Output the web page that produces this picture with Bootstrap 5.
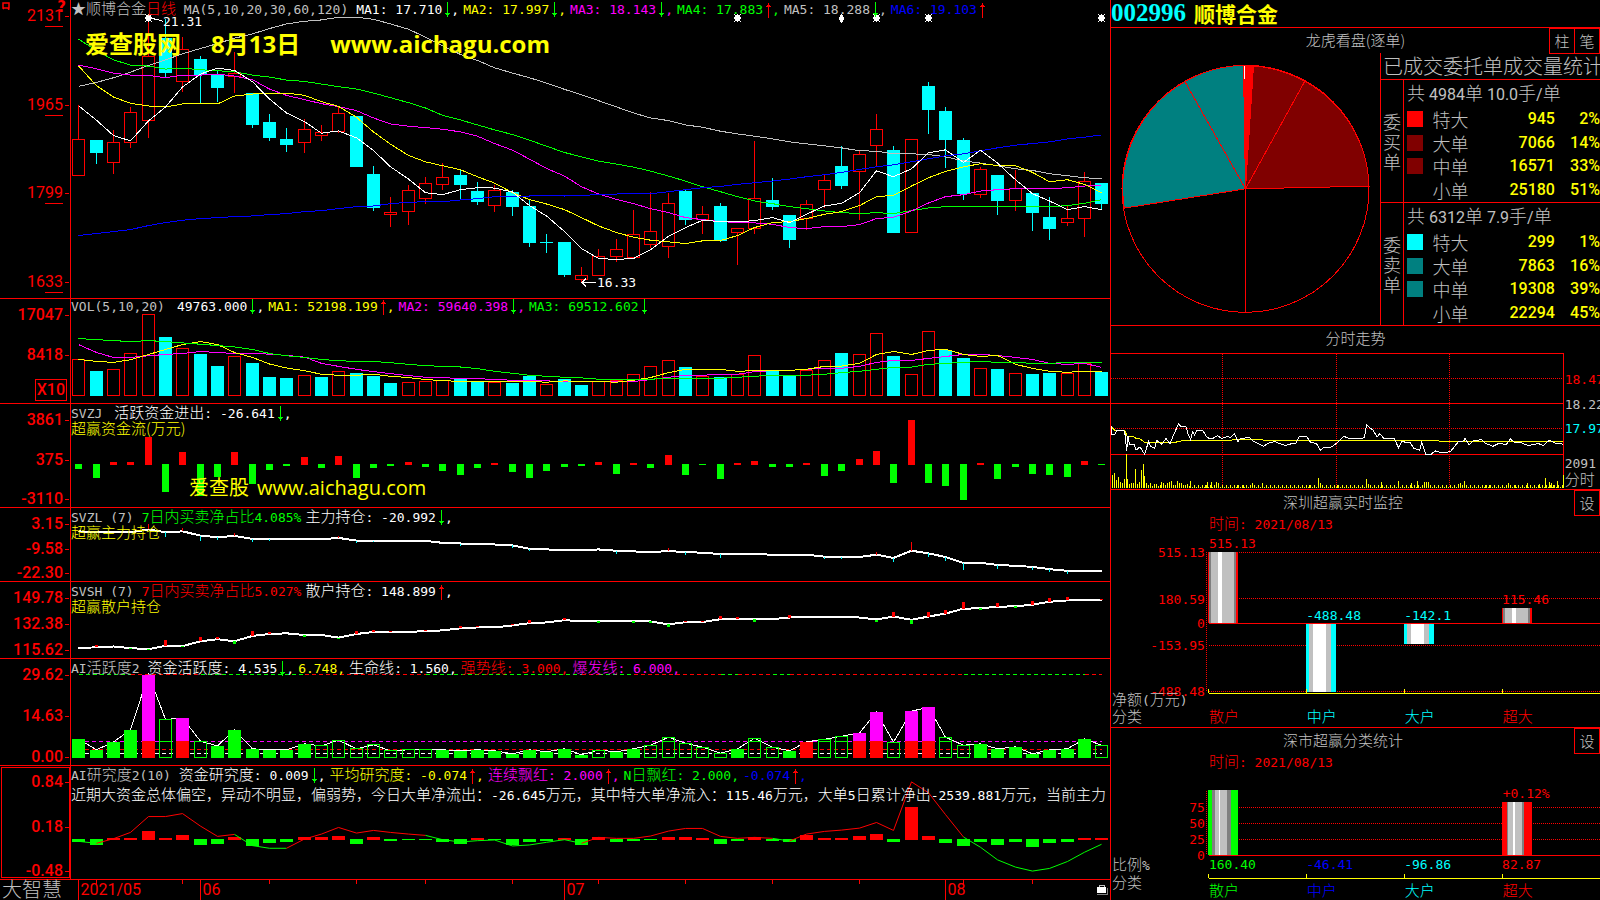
<!DOCTYPE html>
<html lang="zh-CN">
<head>
<meta charset="utf-8">
<meta name="viewport" content="width=device-width, initial-scale=1">
<title>顺博合金 002996</title>
<link href="https://cdn.jsdelivr.net/npm/bootstrap@5.3.0/dist/css/bootstrap.min.css" rel="stylesheet">
<style>
:root{--r:#f00;--g:#0f0;--c:#0ff;--y:#ff0;--m:#f0f;--w:#fff;--s:#c0c0c0;--b:#00f}
body{background:#000;color:var(--s);font-family:"DejaVu Sans Mono","Noto Sans CJK SC",monospace;font-size:13px;line-height:16px;overflow-x:hidden}
.r{color:var(--r)}.g{color:var(--g)}.c{color:var(--c)}.y{color:var(--y)}.m{color:var(--m)}.w{color:var(--w)}.s{color:var(--s)}.b{color:var(--b)}
.zh{font-family:"Noto Sans CJK SC",sans-serif;font-size:15px;font-weight:300}
.terminal{display:grid;grid-template-columns:minmax(0,1110fr) minmax(0,490fr);min-height:100vh}
.charts{display:grid;grid-template-rows:minmax(0,299fr) minmax(0,105fr) minmax(0,104fr) minmax(0,74fr) minmax(0,77fr) minmax(0,107fr) minmax(0,114fr) minmax(0,20fr)}
.quote{display:grid;grid-template-rows:minmax(0,28fr) minmax(0,298fr) minmax(0,164fr) minmax(0,238fr) minmax(0,172fr);border-left:1px solid var(--r)}
.quote>section,.quote>header{border-bottom:1px solid var(--r)}
.quote>section:last-child{border-bottom:0}
.pane{border-bottom:1px solid var(--r)}
.axis{flex:0 0 71px;border-right:1px solid var(--r);padding:8px 7px 0 0;font:500 16px/16px Roboto,"Liberation Sans",sans-serif;color:var(--r)}
.axis>span::after{content:"";position:absolute;right:-6px;top:8px;width:4px;height:1px;background:var(--r)}
.axis>span{position:relative}
.axis.thin{font-weight:400;padding-bottom:8px}
.axis u{text-decoration:none;border-bottom:1px solid var(--r);padding-bottom:1px}
.axis>.unit{border:1px solid var(--r);line-height:20px;margin:-8px -4px 2px 0;padding:0 1px}
.axis>.unit::after{display:none}
.axis.boxed{outline:1px solid var(--r);outline-offset:-2px}
.plot{min-width:0}
.plot>svg,.fill>svg{position:absolute;inset:0;width:100%;height:100%}
svg *{vector-effect:non-scaling-stroke}
.legend-line{gap:4px;white-space:pre;height:16px;align-items:baseline}
.legend-line>:first-child{margin-right:8px}
.legend-line>.snug{margin-right:4px}
.legend-line>span>svg{width:7px;height:16px;margin-left:2px;vertical-align:-4px;margin-top:-4px}
.over{position:relative;white-space:nowrap}
.comment{margin-top:4px}
.note{position:absolute;white-space:nowrap;transform:translateY(-50%)}
.note.end{transform:translate(-100%,-50%)}
.brand{position:absolute;left:14px;top:31px;font:700 24px/26px "Open Sans","Noto Sans CJK SC",sans-serif;color:var(--y);white-space:nowrap;gap:30px}
.brand-low{position:absolute;left:118px;bottom:6px;font:400 20px/26px "Open Sans","Noto Sans CJK SC",sans-serif;color:var(--y);white-space:nowrap;gap:8px}
.logo{flex:0 0 71px;font:300 20px/18px "Noto Sans CJK SC",sans-serif;padding-left:2px;white-space:nowrap}
.dates{font:400 16px/18px Roboto,sans-serif;color:var(--r)}
.menu-mark{position:absolute;left:2px;top:2px;width:8px;height:8px}
.help{position:absolute;right:4px;top:0;font:700 15px/15px "DejaVu Sans",sans-serif}
.code{font:700 25px/26px "Liberation Serif",serif}
.stock{font:700 21px/26px "Noto Sans CJK SC",sans-serif}
.key{background:transparent;border:1px solid var(--r);border-radius:0;color:var(--s);width:26px;height:26px;padding:0;line-height:22px;margin-left:-1px;flex:none}
.key:hover{color:var(--w);border-color:var(--r)}
.stats{flex:0 0 220px;min-width:0;border-left:1px solid var(--r)}
.stats-head{font:300 20px/26px "Noto Sans CJK SC",sans-serif;padding-left:2px;border-bottom:1px solid var(--r);white-space:nowrap}
.side{flex:0 0 23px;font:300 18px/20px "Noto Sans CJK SC",sans-serif;border-right:1px solid var(--r)}
.big{font:400 16px/20px Roboto,"Noto Sans CJK SC",sans-serif}
.big .zh{font-size:18px;line-height:20px}
.book{height:100%;width:100%}
.book td,.book th{padding:0;vertical-align:middle;font-weight:300;line-height:20px;white-space:nowrap}
.book th{padding-left:3px;font-weight:400}
.book .num{font-weight:500;color:var(--y);text-align:right}
.swatch{display:block;width:16px;height:16px;margin-left:3px}
.group+.group{border-top:1px solid var(--r)}
.sect-title{position:relative;line-height:23px;height:25px}
</style>
</head>
<body>
<svg width="0" height="0" class="position-absolute" aria-hidden="true">
  <symbol id="dn" viewBox="0 0 7 16"><path d="M3.500 0V15M1 11.500H6M2 12.500H5" stroke="#0f0" fill="none" shape-rendering="crispEdges"/></symbol>
  <symbol id="up" viewBox="0 0 7 16"><path d="M3.500 1V16M1 4.500H6M2 3.500H5" stroke="#f00" fill="none" shape-rendering="crispEdges"/></symbol>
</svg>
<main class="terminal">
  <div class="charts">
    <section class="pane d-flex">
      <div class="axis thin d-flex flex-column justify-content-between align-items-end position-relative">
        <svg class="menu-mark" viewBox="0 0 8 8"><path d="M1 1H7V6H1ZM1 7L2 6M7 8L6 6" fill="none" stroke="#f00" stroke-width="1.500"/></svg>
        <b class="help">?</b>
        <span>21<u>31</u></span><span>19<u>65</u></span><span>17<u>99</u></span><span>16<u>33</u></span>
      </div>
      <div class="plot position-relative flex-fill">
        <svg id="kline" preserveAspectRatio="none" viewBox="71 0 1039 897"></svg>
        <div class="over legend-line d-flex">
          <span class="snug"><span class="zh">★顺博合金<span class="r">日线</span></span> MA(5,10,20,30,60,120)</span>
          <span class="w">MA1: 17.710<svg><use href="#dn"/></svg>,</span>
          <span class="y">MA2: 17.997<svg><use href="#dn"/></svg>,</span>
          <span class="m">MA3: 18.143<svg><use href="#dn"/></svg>,</span>
          <span class="g">MA4: 17.883<svg><use href="#up"/></svg>,</span>
          <span class="s">MA5: 18.288<svg><use href="#dn"/></svg>,</span>
          <span class="b">MA6: 19.103<svg><use href="#up"/></svg></span>
        </div>
        <div class="brand d-flex"><span>爱查股网</span><span>8月13日</span><span>www.aichagu.com</span></div>
      </div>
    </section>
    <section class="pane d-flex">
      <div class="axis d-flex flex-column justify-content-between align-items-end"><span>17047</span><span>8418</span><span class="unit">X10</span></div>
      <div class="plot position-relative flex-fill">
        <svg id="vol" preserveAspectRatio="none" viewBox="71 10 1039 315"></svg>
        <div class="over legend-line d-flex">
          <span>VOL(5,10,20)</span><span class="w">49763.000<svg><use href="#dn"/></svg>,</span>
          <span class="y">MA1: 52198.199<svg><use href="#up"/></svg>,</span>
          <span class="m">MA2: 59640.398<svg><use href="#dn"/></svg>,</span>
          <span class="g">MA3: 69512.602<svg><use href="#dn"/></svg></span>
        </div>
      </div>
    </section>
    <section class="pane d-flex">
      <div class="axis d-flex flex-column justify-content-between align-items-end"><span>3861</span><span>375</span><span>-3110</span></div>
      <div class="plot position-relative flex-fill">
        <svg id="flow" preserveAspectRatio="none" viewBox="71 325 1039 312"></svg>
        <div class="over legend-line d-flex"><span>SVZJ</span><span class="w"><span class="zh">活跃资金进出</span>: -26.641<svg><use href="#dn"/></svg>,</span></div>
        <div class="over y zh">超赢资金流(万元)</div>
        <div class="brand-low d-flex"><span>爱查股</span><span>www.aichagu.com</span></div>
      </div>
    </section>
    <section class="pane d-flex">
      <div class="axis d-flex flex-column justify-content-between align-items-end"><span>3.15</span><span>-9.58</span><span>-22.30</span></div>
      <div class="plot position-relative flex-fill">
        <svg id="main-pos" preserveAspectRatio="none" viewBox="71 637 1039 222"></svg>
        <div class="over legend-line d-flex"><span class="snug">SVZL (7)</span><span class="g">7<span class="zh">日内买卖净占比</span>4.085%</span><span class="w"><span class="zh">主力持仓</span>: -20.992<svg><use href="#dn"/></svg>,</span></div>
        <div class="over y zh">超赢主力持仓</div>
      </div>
    </section>
    <section class="pane d-flex">
      <div class="axis d-flex flex-column justify-content-between align-items-end"><span>149.78</span><span>132.38</span><span>115.62</span></div>
      <div class="plot position-relative flex-fill">
        <svg id="retail-pos" preserveAspectRatio="none" viewBox="71 7 1039 231"></svg>
        <div class="over legend-line d-flex"><span class="snug">SVSH (7)</span><span class="r">7<span class="zh">日内买卖净占比</span>5.027%</span><span class="w"><span class="zh">散户持仓</span>: 148.899<svg><use href="#up"/></svg>,</span></div>
        <div class="over y zh">超赢散户持仓</div>
      </div>
    </section>
    <section class="pane d-flex">
      <div class="axis d-flex flex-column justify-content-between align-items-end"><span>29.62</span><span>14.63</span><span>0.00</span></div>
      <div class="plot position-relative flex-fill">
        <svg id="active" preserveAspectRatio="none" viewBox="71 238 1039 321"></svg>
        <div class="over legend-line d-flex"><span class="snug">AI<span class="zh">活跃度</span>2</span><span class="w"><span class="zh">资金活跃度</span>: 4.535<svg><use href="#dn"/></svg>,</span><span class="y">6.748,</span><span class="w"><span class="zh">生命线</span>: 1.560,</span><span class="r"><span class="zh">强势线</span>: 3.000,</span><span class="m"><span class="zh">爆发线</span>: 6.000,</span></div>
      </div>
    </section>
    <section class="pane d-flex">
      <div class="axis boxed d-flex flex-column justify-content-between align-items-end"><span>0.84</span><span>0.18</span><span>-0.48</span></div>
      <div class="plot position-relative flex-fill">
        <svg id="research" preserveAspectRatio="none" viewBox="71 559 1039 342"></svg>
        <div class="over legend-line d-flex"><span class="snug">AI<span class="zh">研究度</span>2(10)</span><span class="w"><span class="zh">资金研究度</span>: 0.009<svg><use href="#dn"/></svg>,</span><span class="y"><span class="zh">平均研究度</span>: -0.074<svg><use href="#up"/></svg>,</span><span class="m"><span class="zh">连续飘红</span>: 2.000<svg><use href="#up"/></svg>,</span><span class="g">N<span class="zh">日飘红</span>: 2.000,</span><span class="b">-0.074<svg><use href="#up"/></svg>,</span></div>
        <div class="over w comment"><span class="zh">近期大资金总体偏空，异动不明显，偏弱势，今日大单净流出：</span>-26.645<span class="zh">万元，其中特大单净流入：</span>115.46<span class="zh">万元，大单</span>5<span class="zh">日累计净出</span>-2539.881<span class="zh">万元，当前主力</span></div>
      </div>
    </section>
    <footer class="d-flex">
      <div class="logo">大智慧</div>
      <div class="plot dates position-relative flex-fill" id="dates"><svg id="ticks" preserveAspectRatio="none" viewBox="71 0 1039 20"></svg></div>
    </footer>
  </div>

  <div class="quote">
    <header class="d-flex gap-2"><span class="code c">002996</span><span class="stock y">顺博合金</span></header>
    <section class="d-flex flex-column">
      <div class="sect-title text-center zh">龙虎看盘(逐单)
        <div class="d-flex position-absolute top-0 end-0"><button class="btn key zh" type="button">柱</button><button class="btn key zh" type="button">笔</button></div>
      </div>
      <div class="d-flex flex-fill">
        <div class="fill flex-fill position-relative">
          <svg viewBox="18 162 808 817" fill="none" stroke="#f00" shape-rendering="crispEdges">
            <path d="M422 570L416 199A370 370 0 0 0 240 248Z" fill="#008080"/>
            <path d="M422 570L240 248A370 370 0 0 0 58 628Z" fill="#008080"/>
            <path d="M422 570L446 201A370 370 0 0 1 600 247Z" fill="#800000"/>
            <path d="M422 570L600 247A370 370 0 0 1 793 562Z" fill="#800000"/>
            <path d="M422 570L416 199H446Z" fill="#f00"/>
            <circle cx="422" cy="570" r="371"/><path d="M422 570V941"/><path d="M418 201V240" stroke="#fff"/>
          </svg>
        </div>
        <div class="stats d-flex flex-column">
          <div class="stats-head">已成交委托单成交量统计</div>
          <div class="group d-flex flex-fill">
            <div class="side d-flex flex-column justify-content-center align-items-center"><span>委</span><span>买</span><span>单</span></div>
            <table class="book big">
              <tr><th colspan="4"><span class="zh">共</span> 4984<span class="zh">单</span> 10.0<span class="zh">手</span>/<span class="zh">单</span></th></tr>
              <tr><td><span class="swatch" style="background:#f00"></span></td><td class="zh">特大</td><td class="num">945</td><td class="num">2%</td></tr>
              <tr><td><span class="swatch" style="background:#800000"></span></td><td class="zh">大单</td><td class="num">7066</td><td class="num">14%</td></tr>
              <tr><td><span class="swatch" style="background:#800000"></span></td><td class="zh">中单</td><td class="num">16571</td><td class="num">33%</td></tr>
              <tr><td></td><td class="zh">小单</td><td class="num">25180</td><td class="num">51%</td></tr>
            </table>
          </div>
          <div class="group d-flex flex-fill">
            <div class="side d-flex flex-column justify-content-center align-items-center"><span>委</span><span>卖</span><span>单</span></div>
            <table class="book big">
              <tr><th colspan="4"><span class="zh">共</span> 6312<span class="zh">单</span> 7.9<span class="zh">手</span>/<span class="zh">单</span></th></tr>
              <tr><td><span class="swatch" style="background:#0ff"></span></td><td class="zh">特大</td><td class="num">299</td><td class="num">1%</td></tr>
              <tr><td><span class="swatch" style="background:#008080"></span></td><td class="zh">大单</td><td class="num">7863</td><td class="num">16%</td></tr>
              <tr><td><span class="swatch" style="background:#008080"></span></td><td class="zh">中单</td><td class="num">19308</td><td class="num">39%</td></tr>
              <tr><td></td><td class="zh">小单</td><td class="num">22294</td><td class="num">45%</td></tr>
            </table>
          </div>
        </div>
      </div>
    </section>
    <section class="fill position-relative" id="intra-box">
      <svg id="intra" preserveAspectRatio="none" viewBox="17 19 1468 492"></svg>
      <div class="sect-title text-center zh">分时走势</div>
    </section>
    <section class="fill position-relative" id="live-box">
      <svg id="live" preserveAspectRatio="none" viewBox="17 0 1468 714"></svg>
      <div class="sect-title d-flex text-center zh"><span class="flex-fill">深圳超赢实时监控</span>
        <button class="btn key zh" type="button">设</button></div>
    </section>
    <section class="fill position-relative" id="class-box">
      <svg id="classes" preserveAspectRatio="none" viewBox="17 24 1468 516"></svg>
      <div class="sect-title d-flex text-center zh"><span class="flex-fill">深市超赢分类统计</span>
        <button class="btn key zh" type="button">设</button></div>
    </section>
  </div>
</main>
<script src="https://cdn.jsdelivr.net/npm/bootstrap@5.3.0/dist/js/bootstrap.bundle.min.js"></script>
<script>
const R='#f00',G='#0f0',C='#0ff',Y='#ff0',M='#f0f',W='#fff',S='#c0c0c0',B='#00f';
const X=i=>Math.round(78.2+17.34*i)+.5;
const put=(id,s)=>document.getElementById(id).innerHTML=`<g fill="none" shape-rendering="crispEdges">${s}</g>`;
const line=(a,c,w=1,from=0)=>`<polyline stroke="${c}" stroke-width="${w}" points="${a.map((y,i)=>X(i+from)+','+y).join(' ')}"/>`;
const seg=(x1,y1,x2,y2,c,w=1,d='')=>`<path d="M${x1} ${y1}L${x2} ${y2}" stroke="${c}" stroke-width="${w}" ${d?`stroke-dasharray="${d}"`:''}/>`;
const fillR=(x,y,w,h,c)=>`<rect x="${x}" y="${y}" width="${w}" height="${h}" fill="${c}"/>`;
const box=(x,y,w,h,c)=>`<rect x="${x}" y="${y}" width="${w}" height="${h}" stroke="${c}"/>`;
const hollow=(i,t,b,c)=>box(X(i)-6,t,12,b-t,c);
const solid=(i,t,b,c)=>fillR(X(i)-6.5,t,13,b-t,c);

/* daily candles: kind, high, body top, body bottom, low */
const K=`r316,421,527,527 c420,420,462,494 r390,430,488,525 r321,340,428,444 r66,169,364,414 c58,115,219,234 r110,148,244,276 c168,177,227,309 c215,225,264,306 r158,222,230,279 c279,279,375,384 c342,366,414,423 c384,417,435,459 r357,391,428,462 r375,400,409,423 r318,343,395,400 c348,348,504,504 c501,525,627,636 r594,640,647,682 r558,574,637,678 r534,553,598,615 r492,535,554,573 c512,528,558,600 c549,576,609,618 r558,574,620,639 c573,579,624,651 c600,621,732,744 c705,729,732,762 c729,729,828,834 r804,829,842,850 r750,772,829,829 r720,751,772,789 r633,706,775,776 r579,697,736,748 r582,613,742,777 c570,576,663,678 r621,646,661,705 c612,621,726,729 r688,688,700,798 r423,598,688,705 c537,603,624,633 c648,648,723,747 r603,616,658,693 r528,544,569,627 c438,501,561,570 r453,466,517,663 r342,391,439,501 c438,453,702,702 r421,421,700,700 c246,258,330,402 c321,333,420,507 c414,420,585,603 r504,511,584,597 c528,528,606,648 r513,568,604,636 c582,582,642,696 c594,654,690,723 r621,658,670,681 r519,547,658,714 c552,552,615,633`.split(' ');
let s='';
K.forEach((k,i)=>{const [h,t,b,l]=k.slice(1).split(',').map(Number);
  s+=k[0]=='r'?seg(X(i),h,X(i),t,R)+seg(X(i),b,X(i),l,R)+hollow(i,t,b,R):seg(X(i),h,X(i),l,C)+solid(i,t,b,C)});
s+=line([260,248,234,217,197,180,162,146,131,115,102,86,72,64,60,52,52,58,72,88,112,138,164,182,204,220,234,250,269,285,303,322,340,355,363,376,383,395,403,410,418,427,433,439,445,454,455,463,463,465,472,484,491,499,508,513,523,529,535,538],S);
s+=line([118,152,180,196,199,208,205,210,213,216,226,232,241,245,253,261,268,280,294,309,325,347,361,376,391,405,422,440,459,472,485,494,503,515,530,545,562,577,592,605,613,622,628,635,640,643,640,643,634,626,622,622,622,622,622,622,622,619,612,601],G);
s+=line([196,207,220,226,227,234,226,226,223,229,240,268,287,300,312,321,333,355,373,380,384,389,397,410,432,452,479,507,530,562,584,600,613,628,640,655,661,667,670,671,675,685,688,682,682,676,658,654,635,611,592,586,575,571,568,568,568,565,560,558],M);
s+=line([198,258,292,311,319,322,313,313,313,289,283,281,280,287,306,320,353,397,434,468,487,499,511,532,551,580,601,614,631,655,680,700,714,723,728,733,725,724,709,685,670,667,658,645,637,619,592,588,560,535,516,502,493,498,499,519,547,541,555,580],Y);
s+=line([709,703,697,691,679,670,663,658,655,652,650,646,643,637,634,628,622,620,613,609,607,607,602,598,592,592,590,589,590,589,585,584,583,583,577,571,565,561,555,550,545,539,532,526,519,510,502,496,487,478,469,463,454,445,437,432,427,418,413,406],B);
s+=line([318,362,408,424,364,322,262,223,205,212,246,298,340,366,401,394,415,453,502,539,580,586,571,565,566,578,619,650,697,748,778,781,778,752,711,685,663,667,668,664,655,670,645,620,612,580,514,532,508,460,451,489,452,491,541,583,605,631,622,631],W);
[4,38,46,49,59].forEach(i=>{const x=X(i);s+=fillR(x-2.5,46,5,18,W)+fillR(x-3.5,52,7,6,W);[-3.5,2.5].forEach(a=>s+=fillR(x+a,43,1,3,W)+fillR(x+a,64,1,3,W));s+=fillR(x-.5,43,1,24,W)});
s+=fillR(X(44)-1.5,46,3,21,W)+fillR(X(44)-2.5,52,5,9,W)+fillR(X(44)-.5,43,1,27,W);
s+=`<path d="M150 55L156 58L163 64M596 850H582M586 838L582 850L586 862" stroke="#fff"/>`;
put('kline',s);

/* volume */
let v=[193,228,223,175,58,126,160,177,213,184,204,246,249,241,246,229,234,243,264,262,259,258,252,260,262,264,243,268,252,270,260,257,238,214,196,216,244,246,239,181,228,243,226,196,174,178,115,183,238,109,165,189,220,222,235,237,234,235,205,231];
const kind='rcrrrcrccrcccrcrcccrrrccrccrccrrrrrcrcrrccrrcrrcrrccrcrccrrc';
s='';v.forEach((t,i)=>s+=kind[i]=='r'?hollow(i,t,301,R):solid(i,t,303,C));
s+=line([148,172,187,187,182,178,175,169,172,175,175,177,181,186,205,214,223,230,236,242,247,248,251,251,254,256,257,258,260,260,260,260,260,254,247,241,241,238,238,230,227,226,223,220,220,214,202,196,196,190,184,178,178,181,187,193,205,208,205,217],M);
s+=line([193,199,202,194,178,163,148,139,148,172,187,207,219,227,238,241,241,238,244,248,254,257,260,259,260,260,260,262,258,260,260,262,256,248,233,223,223,223,229,227,226,226,223,214,213,205,178,169,178,166,162,178,184,181,208,220,229,232,229,229],Y);
s+=line([130,133,136,139,136,139,143,147,151,155,163,175,182,187,193,197,199,199,203,208,212,214,216,221,229,235,241,244,247,249,253,253,253,253,250,250,250,250,247,244,241,241,241,238,233,229,223,217,216,208,205,202,199,202,202,205,205,202,202,202],G);
put('vol',s);

/* capital flow */
s='';[522,549,501,501,426,591,471,603,546,471,567,525,513,486,519,483,549,519,513,501,516,528,540,519,504,531,549,528,516,513,501,537,504,519,480,540,510,552,504,498,516,516,504,543,528,492,468,564,372,564,573,615,504,552,516,537,540,546,498,510]
.forEach((e,i)=>s+=e<507?fillR(X(i)-3.5,e,7,510-e,R):fillR(X(i)-3.5,507,7,e-507,G));
put('flow',s);

/* main-force holding */
const mp=[708,711,711,711,702,711,708,721,726,722,731,732,732,732,732,728,736,736,736,736,737,743,745,747,748,751,761,763,765,766,763,767,769,771,768,771,773,777,777,777,779,780,779,785,786,786,779,789,767,775,786,804,804,810,813,816,823,828,828,828];
s=line(mp,W,2);
Object.entries({4:685,5:726,6:699,7:738,8:735,9:713,10:741,11:738,15:723,16:743,17:740,22:753,25:759,26:768,31:777,34:759,35:780,37:789,43:792,44:792,46:771,47:801,48:741,49:786,50:798,51:825,53:822,55:825,56:831,57:837}).forEach(([i,e])=>s+=seg(X(i),mp[i],X(i),e,e<mp[i]?R:C));
put('main-pos',s);

/* retail holding */
const rp=[209,205,203,208,211,201,202,187,181,187,171,165,163,168,168,176,165,159,158,158,157,154,148,145,145,139,132,130,123,126,126,126,126,127,136,129,129,120,120,120,120,115,113,112,112,115,121,112,122,112,103,88,87,82,81,76,67,63,63,63];
s=line(rp,W,2);
Object.entries({0:207,1:198,3:211,4:214,5:183,6:206,7:174,8:174,9:195,10:156,11:159,13:173,15:180,16:156,17:153,18:156,20:153,22:141,23:142,25:135,26:123,28:117,30:131,32:131,33:131,34:144,35:126,36:126,37:111,38:114,39:129,41:108,46:129,47:99,48:135,49:99,50:93,51:69,52:93,53:72,54:87,55:66,56:57,57:54,59:58}).forEach(([i,e])=>s+=seg(X(i),rp[i],X(i),e,e<rp[i]?R:G,3));
put('retail-pos',s);

/* activity */
const A='g480 g513 g489 g453 m285 h421 m417 h487 g501 g453 g510 g513 g513 g495 h501 h484 h510 h498 h516 h513 h513 g513 g516 g513 g516 g525 g513 g519 g510 g528 h514 g519 g510 h499 h475 h493 h505 h523 g510 h478 h505 g516 r489 h481 h472 m462 m399 h490 m396 m384 h475 h499 g495 g510 g504 g525 g513 g510 g480 h499'.split(' ');
s=seg(78,487,1102,487,M,1,'4 3')+seg(78,511,1102,511,R,1,'4 3')+seg(78,523,1102,523,W,1,'4 3');
s+=line(A.map(a=>+a.slice(1)),W);
A.forEach((a,i)=>{const t=+a.slice(1),k=a[0];
  if(k=='g')s+=solid(i,t,537,G);if(k=='r')s+=solid(i,t,537,R);
  if(k=='m')s+=solid(i,t,486,M)+solid(i,486,537,R);
  if(k=='h')s+=hollow(i,t,535,G)+(t<482?seg(X(i)-6,487,X(i)+6,487,G):'')});
[0,3,7,13,20,29,30,32,37,38,40,41,51,58,59].forEach((a,n,l)=>{if(n<14)s+=seg(X(a),286,X(l[n+1]),286,n%2?R:G,1,'4 3')});
put('active',s);

/* research */
s='';[789,798,778,777,756,777,768,798,795,774,801,792,789,774,774,771,795,774,786,783,783,789,795,777,783,798,789,786,777,798,774,789,786,783,774,774,777,795,786,774,786,789,768,777,777,771,765,789,684,771,792,801,789,798,789,804,792,789,777,777]
.forEach((e,i)=>s+=e<780?solid(i,e,783,R):solid(i,780,e,G));
const q=[787,793,779,760,712,712,703,741,772,766,800,808,808,780,765,745,762,754,760,765,769,782,789,785,783,801,798,790,782,793,775,778,778,771,756,748,748,772,778,775,778,786,765,757,753,747,730,754,607,640,706,774,805,843,865,877,869,848,820,796];
[0,1,9,12,20,29,40,41,51,59].forEach((a,n,l)=>{if(n<9)s+=line(q.slice(a,l[n+1]+1),n%2?R:G,1,a)});
put('research',s);

/* floating labels placed from data coordinates */
const note=(id,x,y,t,c,end)=>{
  const host=document.getElementById(id),b=host.querySelector('svg').viewBox.baseVal,e=document.createElement('span');
  e.className='note '+c+(end?' end':'');e.innerHTML=t.replace(/[\u4e00-\u9fff]+/g,z=>`<span class="zh">${z}</span>`);
  e.style.left=(x-b.x)/b.width*100+'%';e.style.top=(y-b.y)/b.height*100+'%';host.append(e)};
const kHost=document.getElementById('kline').parentElement;kHost.id='kline-box';
note('kline-box',163,66,'21.31','w');note('kline-box',597,851,'16.33','w');

/* time axis */
s='';[1,6,11,16,20,25,30,35,40,45,51,55].forEach(i=>s+=seg(X(i),0,X(i),4,R));
[[0,'2021/05'],[7,'06'],[28,'07'],[50,'08']].forEach(([i,t])=>{s+=seg(X(i),0,X(i),20,R);note('dates',X(i)+2,10,t,'r')});
s+=`<path d="M1099 7V5H1104V7" stroke="#c0c0c0"/>`+fillR(1097,7,9,6,W)+seg(1097,14.5,1107,14.5,'#808080')+seg(1107,8,1107,15,'#808080');
put('ticks',s);

/* intraday */
s=[103,253,406].map(y=>seg(17,y,1376,y,R)).join('')+seg(1376,103,1376,508,R)+[178,328].map(y=>seg(17,y,1376,y,R,1,'1 1')).join('')+[352,694,1033].map(x=>seg(x,103,x,508,R,1,'1 1')).join('');
const vb={22:470,28:464,34:483,40:476,46:490,52:493,58:480,64:405,67:480,73:495,79:492,85:492,91:450,97:495,103:491,109:453,115:437,118:473,124:492,130:500,136:492,142:501,148:495,154:495,160:501,166:498,170:489,176:492,182:498,188:492,194:489,200:486,206:498,212:498,218:486,222:492,228:492,234:498,240:498,246:495,252:501,256:486,302:498,308:489,320:489,334:489,340:492,396:498,416:498,442:494,472:492,614:499,640:477,646:492,652:498,696:498,784:480,790:495,830:491,880:486,920:494,936:488,958:489,964:489,970:489,1060:495,1066:492,1078:486,1140:498,1152:498,1210:492,1230:498,1266:494,1304:495,1320:477,1332:489,1338:492,1344:498,1357:486,1375:468};
for(let x=262;x<1375;x+=6)s+=seg(x,500+(x*7%4)*2,x,508,Y);
for(const x in vb)s+=seg(x,vb[x],x,508,Y);
s+=`<polyline stroke="#ff0" points="17,322 28,334 58,334 66,352 84,352 92,358 104,360 118,370 210,370 236,364 380,364 384,361 470,361 474,364 1000,364 1002,367 1375,367"/>`;
s+=`<polyline stroke="#fff" points="17,322 20,346 28,348 34,334 56,336 60,350 64,396 68,350 72,376 86,376 92,394 104,384 118,406 124,386 130,368 136,382 148,388 154,364 170,376 182,358 194,374 204,350 220,314 226,322 242,322 248,344 256,362 262,338 268,348 274,334 292,334 306,356 320,360 336,350 350,358 368,352 376,356 388,344 398,368 406,358 434,356 444,366 474,382 492,372 508,368 540,380 560,374 572,374 582,352 604,352 616,370 634,374 646,394 654,386 680,384 700,368 716,352 730,358 750,358 766,360 778,356 784,318 804,334 816,354 824,344 836,358 868,360 880,386 890,368 904,370 916,372 926,388 944,394 950,370 962,406 978,406 990,396 1012,402 1036,398 1060,368 1076,366 1080,358 1092,378 1104,366 1130,362 1142,374 1164,382 1180,374 1204,376 1216,360 1230,372 1250,372 1270,380 1300,374 1316,380 1332,364 1350,372 1375,376"/>`;
put('intra',s);
[[181,'18.47','r'],[256,'18.22','s'],[331,'17.97','c'],[436,'2091','s'],[485,'分时','s']].forEach(([y,t,c])=>note('intra-box',1379,y,t,c));

/* shaded column: pairs of width and colour */
const column=(x,y,h,parts)=>parts.map(([w,c])=>{const o=fillR(x,y,w,h,c);x+=w;return o}).join('');
const D='#808080',dot='1 1';
s=[187,328,469,607].map(y=>seg(310,y,1485,y,R,1,dot)).join('')+seg(304,188,304,607,R,1,dot);
s+=column(309,186,216,[[3,R],[6,D],[21,S],[12,W],[36,S],[6,D],[6,R]]);
s+=column(603,405,204,[[9,C],[12,S],[39,W],[15,S],[15,C]]);
s+=column(897,405,60,[[9,C],[12,S],[39,W],[15,S],[15,C]]);
s+=column(1191,354,49,[[3,R],[6,D],[21,S],[12,W],[36,S],[6,D],[6,R]]);
s+=seg(310,403,1485,403,R)+seg(310,613,1485,613,Y)+[310,604,898,1192].map(x=>seg(x,600,x,613,Y)).join('');
put('live',s);
[[190,'515.13'],[331,'180.59'],[405,'0'],[471,'-153.95'],[609,'-488.48']].forEach(([y,t])=>note('live-box',299,y,t,'r',1));
[[311,103,'时间: 2021/08/13','r'],[311,163,'515.13','r'],[603,379,'-488.48','c'],[897,379,'-142.1','c'],[1191,331,'115.46','r'],[20,634,'净额(万元)','s'],[20,683,'分类','s'],[311,683,'散户','r'],[605,683,'中户','c'],[899,683,'大户','c'],[1193,683,'超大','r']].forEach(a=>note('live-box',...a));

s=[262,310,358].map(y=>seg(310,y,1485,y,R,1,dot)).join('')+seg(304,212,304,404,R,1,dot);
s+=column(309,210,196,[[12,G],[9,D],[12,S],[3,W],[21,S],[11,D],[22,G]]);
s+=column(1191,246,160,[[15,R],[3,D],[15,S],[6,W],[21,S],[6,D],[24,R]]);
s+=seg(310,406,1485,406,R)+seg(310,475,1485,475,Y)+[310,604,898,1192].map(x=>seg(x,462,x,475,Y)).join('');
put('classes',s);
[[265,'75'],[313,'50'],[361,'25'],[409,'0']].forEach(([y,t])=>note('class-box',299,y,t,'r',1));
[[311,127,'时间: 2021/08/13','r'],[1193,223,'+0.12%','r'],[311,436,'160.40','g'],[603,436,'-46.41','b'],[897,436,'-96.86','c'],[1191,436,'82.87','r'],[20,434,'比例%','s'],[20,488,'分类','s'],[311,514,'散户','g'],[605,514,'中户','b'],[899,514,'大户','c'],[1193,514,'超大','r']].forEach(a=>note('class-box',...a));
</script>
</body>
</html>
